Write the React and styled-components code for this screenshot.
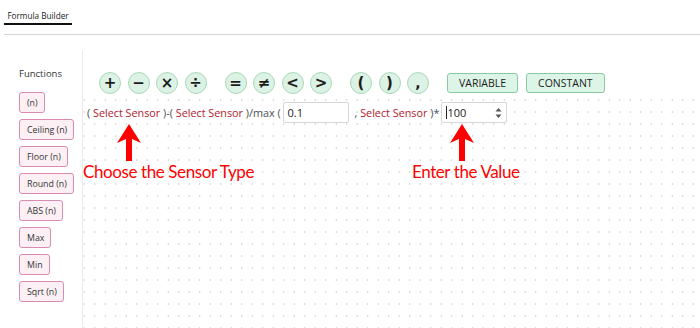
import styled, { createGlobalStyle } from "styled-components";

const Global = createGlobalStyle`
  body {
    margin: 0;
    background: #fff;
    font-family: "Open Sans", "Noto Sans", sans-serif;
    color: #222;
  }
`;

const FUNCS = ["(n)", "Ceiling (n)", "Floor (n)", "Round (n)", "ABS (n)", "Max", "Min", "Sqrt (n)"];
const OPS = [["+", "−", "×", "÷"], ["=", "≠", "<", ">"], ["(", ")", ","]];

export default function App() {
  return (
    <>
      <Global />
      <Page>
        <Header>
          <Tab>Formula Builder</Tab>
        </Header>
        <Content>
          <Sidebar>
            <SideTitle>Functions</SideTitle>
            <FuncList>
              {FUNCS.map((f) => (
                <FuncButton key={f}>{f}</FuncButton>
              ))}
            </FuncList>
          </Sidebar>
          <Main>
            <Toolbar>
              {OPS.map((group, i) => (
                <OpGroup key={i}>
                  {group.map((op) => (
                    <OpButton key={op} $small={op === ","}>{op}</OpButton>
                  ))}
                </OpGroup>
              ))}
              <OpGroup $gap={8}>
                <TypeButton>VARIABLE</TypeButton>
                <TypeButton>CONSTANT</TypeButton>
              </OpGroup>
            </Toolbar>
            <Canvas>
              <FormulaRow>
                <Paren>(</Paren>
                <Sensor>&nbsp;Select Sensor&nbsp;</Sensor>
                <Paren>)-(</Paren>
                <Sensor>&nbsp;Select Sensor&nbsp;</Sensor>
                <Paren>)/max (</Paren>
                <ValueBox $w={66} $ml={2} $mr={6}>
                  <ValueText>0.1</ValueText>
                </ValueBox>
                <Paren>,</Paren>
                <Sensor>&nbsp;Select Sensor&nbsp;</Sensor>
                <Paren>)*</Paren>
                <ValueBox $w={66} $ml={2}>
                  <Caret />
                  <ValueText>100</ValueText>
                  <Spinner>
                    <svg width="7" height="12" viewBox="0 0 7 12">
                      <path d="M3.5 1 L6.5 4.5 L0.5 4.5 Z" fill="#555" />
                      <path d="M3.5 11 L6.5 7.5 L0.5 7.5 Z" fill="#555" />
                    </svg>
                  </Spinner>
                </ValueBox>
              </FormulaRow>
              <Annotation $left={0} $top={27} $arrowX={34}>
                <Arrow />
                <Note>Choose the Sensor Type</Note>
              </Annotation>
              <Annotation $left={329} $top={27} $arrowX={38}>
                <Arrow />
                <Note>Enter the Value</Note>
              </Annotation>
            </Canvas>
          </Main>
        </Content>
      </Page>
    </>
  );
}

function Arrow() {
  return (
    <ArrowSvg width="24" height="37" viewBox="0 0 24 37">
      <polygon points="12,0 24,19 15,15 15,37 9,37 9,15 0,19" fill="#ff0000" />
    </ArrowSvg>
  );
}

const Page = styled.div`
  width: 700px;
  height: 328px;
  overflow: hidden;
`;

const Header = styled.div`
  margin-left: 4px;
  height: 34px;
  border-bottom: 1px solid #d4d4d4;
`;

const Tab = styled.div`
  width: 68px;
  height: 25px;
  box-sizing: border-box;
  padding-top: 10px;
  text-align: center;
  font-size: 8.2px;
  color: #222;
  border-bottom: 2px solid #111;
`;

const Content = styled.div`
  display: flex;
  margin-top: 15px;
`;

const Sidebar = styled.div`
  width: 83px;
  flex: none;
  box-sizing: border-box;
  padding: 17px 0 0 19px;
  border-right: 1px solid #ececec;
  height: 279px;
`;

const SideTitle = styled.div`
  font-size: 9.5px;
  line-height: 13px;
  color: #333;
  margin-bottom: 12px;
`;

const FuncList = styled.div`
  display: flex;
  flex-direction: column;
  align-items: flex-start;
  gap: 6px;
`;

const FuncButton = styled.div`
  height: 21px;
  box-sizing: border-box;
  display: flex;
  align-items: center;
  padding: 0 6px 0 7px;
  font-size: 8.8px;
  color: #333;
  background: #fdf0f5;
  border: 1px solid #d98bb0;
  border-radius: 3px;
`;

const Main = styled.div`
  flex: 1;
  display: flex;
  flex-direction: column;
`;

const Toolbar = styled.div`
  display: flex;
  align-items: center;
  gap: 18px;
  padding: 22px 0 0 16px;
  height: 22px;
  margin-bottom: 3px;
`;

const OpGroup = styled.div`
  display: flex;
  align-items: center;
  gap: ${(p) => p.$gap ?? 6.5}px;
`;

const OpButton = styled.div`
  width: 22px;
  height: 22px;
  box-sizing: border-box;
  border-radius: 50%;
  background: #dcf2e4;
  border: 1px solid #a9d8b9;
  display: flex;
  align-items: center;
  justify-content: center;
  font-family: "DejaVu Sans", sans-serif;
  font-weight: bold;
  font-size: ${(p) => (p.$small ? 14 : 15)}px;
  line-height: 1;
  color: #1c1c1c;
`;

const TypeButton = styled.div`
  height: 20px;
  box-sizing: border-box;
  padding: 0 11px;
  display: flex;
  align-items: center;
  font-size: 10.5px;
  color: #1c1c1c;
  background: #dcf5e6;
  border: 1px solid #8cc8a2;
  border-radius: 3px;
`;

const Canvas = styled.div`
  position: relative;
  flex: 1;
  height: 231px;
  padding: 5px 0 0 4px;
  box-sizing: border-box;
  background-image: radial-gradient(circle, #d2d2d2 0.7px, transparent 1.1px);
  background-size: 10.5px 12px;
  background-position: -4px -3px;
`;

const FormulaRow = styled.div`
  display: flex;
  align-items: center;
  height: 21px;
  font-size: 10.8px;
  white-space: nowrap;
`;

const Paren = styled.span`
  color: #4a4f58;
`;

const Sensor = styled.span`
  color: #b4202f;
`;

const ValueBox = styled.div`
  width: ${(p) => p.$w}px;
  height: 21px;
  box-sizing: border-box;
  margin-left: ${(p) => p.$ml ?? 0}px;
  margin-right: ${(p) => p.$mr ?? 0}px;
  display: flex;
  align-items: center;
  padding: 0 4px;
  background: #fff;
  border: 1px solid #d6d6d6;
  border-radius: 2px;
  font-size: 11px;
  color: #222;
`;

const ValueText = styled.span`
  flex: 1;
`;

const Caret = styled.span`
  width: 1px;
  height: 13px;
  background: #222;
`;

const Spinner = styled.span`
  display: flex;
  align-items: center;
`;

const Annotation = styled.div`
  position: absolute;
  left: ${(p) => p.$left}px;
  top: ${(p) => p.$top}px;
  display: flex;
  flex-direction: column;
  align-items: flex-start;
  svg {
    margin-left: ${(p) => p.$arrowX}px;
  }
`;

const ArrowSvg = styled.svg`
  display: block;
`;

const Note = styled.div`
  font-family: Lato, "Open Sans", sans-serif;
  font-size: 17px;
  line-height: 22px;
  color: #ff0000;
  white-space: nowrap;
  letter-spacing: -0.4px;
`;
